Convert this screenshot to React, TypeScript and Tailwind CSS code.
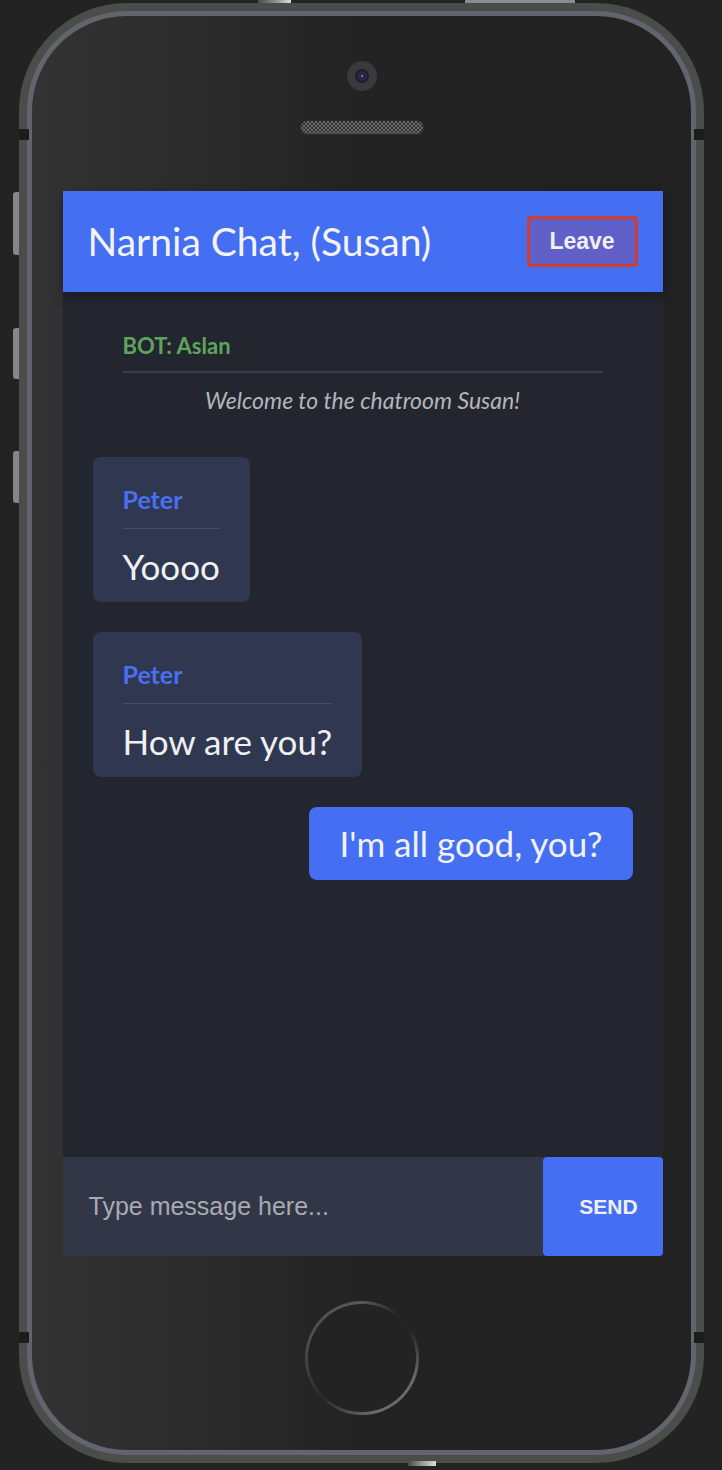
import React from "react";

const sans = { fontFamily: "Lato, 'Open Sans', sans-serif" };
const arial = { fontFamily: "'Liberation Sans', Arial, sans-serif" };

type Msg = { from: string; text: string; mine?: boolean };

const messages: Msg[] = [
  { from: "Peter", text: "Yoooo" },
  { from: "Peter", text: "How are you?" },
  { from: "Susan", text: "I'm all good, you?", mine: true },
];

const Bubble = ({ msg }: { msg: Msg }) => {
  if (msg.mine) {
    return (
      <div className="flex justify-end">
        <div className="bg-[#456ff2] rounded-lg px-[30px] h-[73px] flex items-center text-[35px] text-[#f2f2f5]">
          {msg.text}
        </div>
      </div>
    );
  }
  return (
    <div className="flex">
      <div className="bg-[#2f3850] rounded-lg px-[30px] pt-[28px] pb-[16px] flex flex-col">
        <span className="text-[25px] font-bold text-[#4a6ff0] leading-[28px]">{msg.from}</span>
        <div className="h-[1px] bg-[#48505f] mt-[15px] mb-[17px]" />
        <span className="text-[35px] text-[#f0f0f2] leading-[40px]">{msg.text}</span>
      </div>
    </div>
  );
};

const ChatScreen = () => (
  <div className="w-[600px] h-[1065px] bg-[#23262f] flex flex-col" style={sans}>
    <div className="h-[101px] bg-[#456ff2] flex items-center justify-between px-[25px] shadow-[0_4px_10px_rgba(0,0,0,0.35)] relative z-10">
      <h1 className="text-[39px] text-[#f3f3f6] font-normal">Narnia Chat, (Susan)</h1>
      <button
        className="w-[111px] h-[51px] bg-[#6060c8] border-[3px] border-[#d13c2c] rounded-[4px] text-[23px] font-bold text-[#f0f0f4]"
        style={arial}
      >
        Leave
      </button>
    </div>

    <div className="flex-1 flex flex-col px-[30px] pt-[40px]">
      <div className="mx-[30px] flex flex-col">
        <span className="text-[22px] font-bold text-[#5ea55c] leading-[28px]">BOT: Aslan</span>
        <div className="h-[2px] bg-[#373c47] mt-[11px]" />
        <span className="text-[23px] italic text-[#b4b4ba] text-center leading-[28px] mt-[13px]">
          Welcome to the chatroom Susan!
        </span>
      </div>
      <div className="flex flex-col gap-[30px] mt-[43px]">
        {messages.map((m, i) => (
          <Bubble key={i} msg={m} />
        ))}
      </div>
    </div>

    <div className="h-[99px] flex">
      <div className="flex-1 bg-[#323747] flex items-center px-[26px]">
        <span className="text-[25px] text-[#a8aab2]" style={arial}>
          Type message here...
        </span>
      </div>
      <button
        className="w-[120px] bg-[#456ff2] rounded-[4px] pl-[12px] text-[21px] font-bold text-[#f0f0f4]"
        style={arial}
      >
        SEND
      </button>
    </div>
  </div>
);

export default function App() {
  return (
    <div className="w-[722px] h-[1470px] bg-[#232323] overflow-hidden relative">
      {/* side buttons */}
      <div className="absolute left-[13px] top-[192px] w-[7px] h-[63px] rounded-l-[3px] bg-[#85858a]" />
      <div className="absolute left-[13px] top-[328px] w-[7px] h-[51px] rounded-l-[3px] bg-[#85858a]" />
      <div className="absolute left-[13px] top-[451px] w-[7px] h-[52px] rounded-l-[3px] bg-[#85858a]" />
      {/* top buttons */}
      <div className="absolute left-[258px] top-0 w-[33px] h-[4px] bg-gradient-to-r from-[#4a4d4a] via-[#8a8a8a] to-[#e0e0e0]" />
      <div className="absolute left-[465px] top-0 w-[110px] h-[3px] bg-[#8c8c90]" />

      <div className="ml-[19px] mt-[3px] w-[685px] h-[1460px] rounded-[108px] bg-[#4a4d4a] p-[8px] relative">
        {/* frame notches */}
        <div className="absolute left-0 top-[126px] w-[10px] h-[11px] bg-[#1c1c1c]" />
        <div className="absolute right-0 top-[126px] w-[10px] h-[11px] bg-[#1c1c1c]" />
        <div className="absolute left-0 top-[1329px] w-[10px] h-[11px] bg-[#1c1c1c]" />
        <div className="absolute right-0 top-[1329px] w-[10px] h-[11px] bg-[#1c1c1c]" />
        <div className="absolute left-[389px] bottom-[-3px] w-[28px] h-[5px] bg-gradient-to-r from-[#4a4d4a] via-[#999] to-[#ddd]" />

        <div className="w-full h-full rounded-[100px] bg-[#62656d] p-[5px]">
          <div className="w-full h-full rounded-[95px] bg-gradient-to-r from-[#333333] via-[#232323] to-[#222222] flex flex-col items-center">
            <div className="h-[175px] w-full flex flex-col items-center">
              <div className="mt-[45px] w-[30px] h-[30px] rounded-full bg-[#3a3a3c] flex items-center justify-center">
                <div className="w-[14px] h-[14px] rounded-full bg-[#2a2646] border-2 border-[#1d1b2c] flex items-center justify-center">
                  <div className="w-[2px] h-[2px] rounded-full bg-[#8c88c0]" />
                </div>
              </div>
              <div
                className="mt-[29px] w-[124px] h-[15px] rounded-full border border-[#2a2a2a] bg-[#555]"
                style={{
                  backgroundImage:
                    "repeating-conic-gradient(#6a6a6a 0 25%, #333 0 50%)",
                  backgroundSize: "4px 4px",
                }}
              />
            </div>
            <div className="ml-[2px]">
              <ChatScreen />
            </div>
            <div className="flex-1 flex items-start justify-center pt-[45px]">
              <div className="w-[114px] h-[114px] rounded-full p-[3px] bg-[conic-gradient(#5a5a5a_0deg,#252525_40deg,#252525_60deg,#6a6a6a_110deg,#6a6a6a_170deg,#2a2a2a_225deg,#4a4a4a_280deg,#5a5a5a_360deg)]">
                <div className="w-full h-full rounded-full bg-[#232323]" />
              </div>
            </div>
          </div>
        </div>
      </div>
    </div>
  );
}
